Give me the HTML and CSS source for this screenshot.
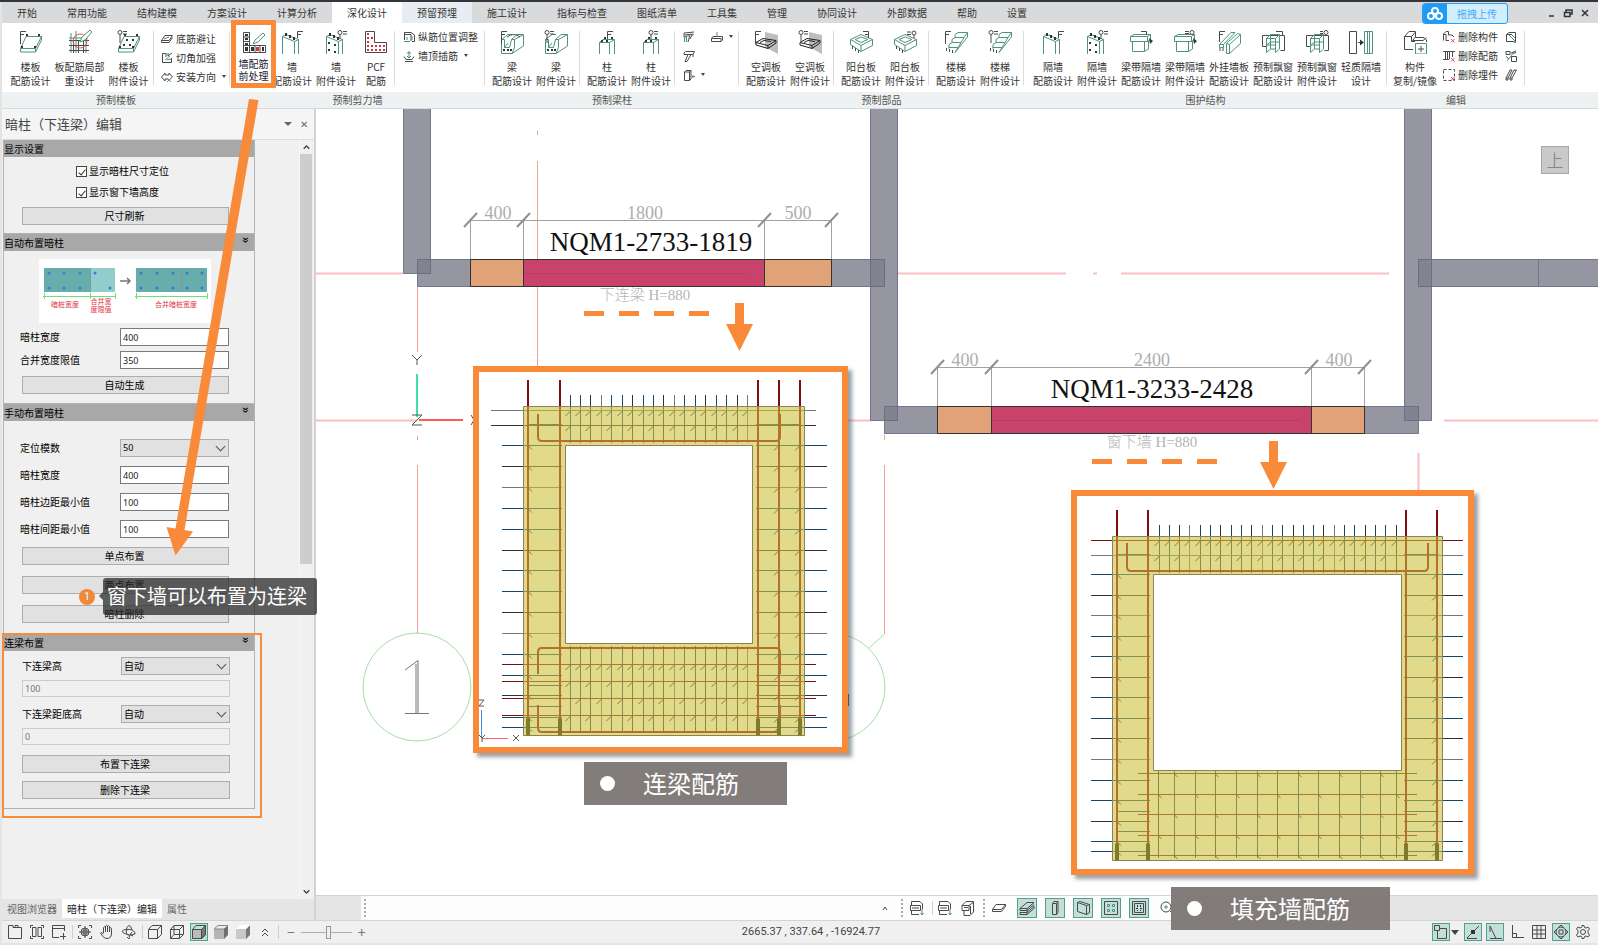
FILE: index.html
```html
<!DOCTYPE html>
<html lang="zh-CN">
<head>
<meta charset="utf-8">
<title>深化设计</title>
<link rel="stylesheet" href="styles.css">
</head>
<body>
<svg class="defs" aria-hidden="true">
  <symbol id="flag-l" viewBox="0 0 24 24"><path class="k" d="M1.500 14V1.500H7M2 4.500H5"/></symbol>
  <symbol id="flag-r" viewBox="0 0 24 24"><path class="k" d="M17.500 8V1.500H23M18 4.500H21"/></symbol>
  <symbol id="pin-l" viewBox="0 0 24 24"><circle class="k" cx="3" cy="2.500" r="2"/><path class="k" d="M3 5V13M6 1.500H10M6 4H10"/></symbol>
  <symbol id="pin-r" viewBox="0 0 24 24"><circle class="k" cx="16" cy="2.500" r="2"/><path class="k" d="M16 5V9M19 1.500H23M19 4H23"/></symbol>
  <symbol id="slab" viewBox="0 0 24 24"><path class="g" d="M7 6.500H22.500L16.500 18.500H1.500ZM1.500 18.500V22H16.500V18.500M22.500 6.500V10L16.500 22"/><path class="d" d="M7 4h2v2H7zM19 4h2v2h-2zM2 16h2v2H2zM15 16h2v2h-2z"/></symbol>
  <symbol id="i-slab-bar" viewBox="0 0 24 24"><use href="#slab"/><use href="#flag-l"/></symbol>
  <symbol id="i-slab-part" viewBox="0 0 24 24"><use href="#slab"/><use href="#pin-l"/><path class="d" d="M9 9h2v2H9zM15 9h2v2h-2zM6 14h2v2H6zM12 14h2v2h-2z"/></symbol>
  <symbol id="i-slab-local" viewBox="0 0 24 24"><path class="g" d="M3 3V23M8 1V23M1 8H20M18 9V23"/><path class="k" d="M1 10.500H21M1 15.500H21M1 20.500H21M5.500 10V23M10.500 10V23M15.500 10V23"/><circle class="rs" cx="12" cy="11" r="7"/><path class="g w" d="M12 12L14 7L22 0L24 2L17 10Z"/></symbol>
  <symbol id="i-prewall" viewBox="0 0 24 24"><path class="k" d="M1.500 1.500H7.500V14.500H23.500V21.500H1.500ZM1.500 14.500H7.500V21.500M1.500 6H7.500M1.500 10.500H7.500M13 14.500V21.500M18 14.500V21.500"/><path class="d" d="M3 3h3v2H3zM3 7h3v2H3zM3 12h3v2H3zM3 16h3v4H3zM9 16h3v4H9zM20 16h2v4h-2z"/><path class="rf" d="M14 16h3v4h-3z"/><path class="g w" d="M11 13L13 9L21 2L23 4L16 11Z"/></symbol>
  <symbol id="wall" viewBox="0 0 24 24"><path class="g" d="M2.500 24V6.500L14.500 11.500V24M14.500 11.500L18.500 9.500V24M2.500 6.500L6 4.500L18.500 9.500"/><path class="d" d="M5 3h2v3H5zM9 5h2v3H9zM13 7h2v3h-2z"/></symbol>
  <symbol id="i-wall-bar" viewBox="0 0 24 24"><use href="#wall"/><use href="#flag-r"/></symbol>
  <symbol id="i-wall-part" viewBox="0 0 24 24"><use href="#wall"/><use href="#pin-r"/><path class="d" d="M4 12h2v2H4zM10 14h2v2h-2zM4 19h2v2H4zM10 21h2v2h-2z"/></symbol>
  <symbol id="i-pcf" viewBox="0 0 24 24"><path class="k" d="M1.500 1.500H10.500V12.500H22.500V22.500H1.500Z"/><path class="rf" d="M3 3h2v2H3zM3 7h2v2H3zM3 11h2v2H3zM7 7h2v2H7zM3 15h2v2H3zM7 15h2v2H7zM11 15h2v2h-2zM15 15h2v2h-2zM19 15h2v2h-2zM3 19h2v2H3zM7 19h2v2H7zM11 19h2v2h-2zM15 19h2v2h-2zM19 19h2v2h-2z"/></symbol>
  <symbol id="beam" viewBox="0 0 24 24"><path class="g" d="M1.500 23.500V9.500H4.500V17.500H9.500L11.500 9.500H14.500V17.500L12 23.500ZM1.500 9.500L8 4.500H12M11.500 9.500L17 4.500H23.500V16L12 23.500M14.500 9.500L23.500 4.500M4.500 17.500L8 13"/><path class="d" d="M3 19h2v2H3zM7 19h2v2H7zM10 19h2v2h-2z"/></symbol>
  <symbol id="i-beam-bar" viewBox="0 0 24 24"><use href="#beam"/><use href="#flag-l"/><path class="k" d="M7 7Q14 2 20 7"/></symbol>
  <symbol id="i-beam-part" viewBox="0 0 24 24"><use href="#beam"/><use href="#pin-l"/></symbol>
  <symbol id="column" viewBox="0 0 24 24"><path class="g" d="M4.500 24V12.500H14.500V24M4.500 12.500L8 9.500H19.500L14.500 12.500M19.500 9.500V24"/><path class="d" d="M6 10h2v2H6zM11 10h2v2h-2zM9 7h2v2H9zM16 7h2v2h-2z"/></symbol>
  <symbol id="i-col-bar" viewBox="0 0 24 24"><use href="#column"/><path class="k" d="M12.500 9V1.500H18M13 4.500H16"/></symbol>
  <symbol id="i-col-part" viewBox="0 0 24 24"><use href="#column"/><use href="#pin-r" x="-4"/></symbol>
  <symbol id="ac" viewBox="0 0 24 24"><path fill="#bdbdbd" d="M11 2L24 5V24L11 17Z"/><path class="k dk" d="M2 12.500L9 8.500L22 10.500L14 15.500ZM2 12.500V15L14 18.500V15.500M22 10.500V13L14 18.500M6 12.500L10 10.500L17 11.500"/></symbol>
  <symbol id="i-ac-bar" viewBox="0 0 24 24"><use href="#ac"/><use href="#flag-l"/></symbol>
  <symbol id="i-ac-part" viewBox="0 0 24 24"><use href="#ac"/><use href="#pin-l"/></symbol>
  <symbol id="balcony" viewBox="0 0 24 24"><path class="g" d="M1.500 9.500L12 4.500L23.500 9.500L12 15.500ZM1.500 9.500V14.500L12 21.500V15.500M23.500 9.500V15.500L12 21.500M6 9.500L12 7L19 9.500L12 12.500Z"/><path class="k" d="M3.500 16V19M6.500 18V21M9.500 20V23"/></symbol>
  <symbol id="i-bal-bar" viewBox="0 0 24 24"><use href="#balcony"/><path class="k" d="M19.500 8V1.500H14M19 4.500H16"/></symbol>
  <symbol id="i-bal-part" viewBox="0 0 24 24"><use href="#balcony"/><circle class="k" cx="21" cy="3" r="2"/><path class="k" d="M21 5V8M14 2H18M14 4.500H18"/></symbol>
  <symbol id="stair" viewBox="0 0 24 24"><path class="g" d="M11 4.500L14 2.500H23.500L20 7.500H11ZM8 9.500L11 7.500H20L17 12.500H8ZM5 14.500L8 12.500H17L14 17.500H5ZM4 18L7 17.500H14L11 22.500M23.500 2.500V7L11 22.500"/><path class="k" d="M2.500 18V21M5.500 19V22M8.500 20V23"/></symbol>
  <symbol id="i-stair-bar" viewBox="0 0 24 24"><use href="#stair"/><use href="#flag-l"/></symbol>
  <symbol id="i-stair-part" viewBox="0 0 24 24"><use href="#stair"/><use href="#pin-l"/></symbol>
  <symbol id="bwall" viewBox="0 0 24 24"><path class="g" d="M1.500 6.500H18.500V11.500H1.500ZM1.500 6.500L5 4.500H21.500L18.500 6.500M21.500 4.500V9.500L18.500 11.500M3.500 11.500V21.500H15.500V11.500M15.500 21.500L19.500 19V11"/><path class="d" d="M20 8l4 3-3 3z"/></symbol>
  <symbol id="i-bwall-bar" viewBox="0 0 24 24"><use href="#bwall"/><path class="k" d="M17.500 5V1.500H12"/></symbol>
  <symbol id="i-bwall-part" viewBox="0 0 24 24"><use href="#bwall"/><circle class="k" cx="19" cy="2.500" r="2"/><path class="k" d="M12 1.500H16M12 3.500H16"/></symbol>
  <symbol id="i-hang" viewBox="0 0 24 24"><path class="g" d="M9.500 23.500V13.500L20.500 3.500L23.500 4.500V13.500L12.500 23.500ZM9.500 13.500L12.500 14.500V23.500M12.500 14.500L23.500 4.500M2.500 14.500L14 2.500H18L6.500 14.500ZM2.500 14.500V17.500H6.500V14.500"/><path class="k" d="M2.500 12V1.500H8M3 4.500H6M3 18V21M6 18V21"/></symbol>
  <symbol id="bay" viewBox="0 0 24 24"><path class="k" d="M5 16.500H1.500V5.500H23.500V20.500H19.500"/><path class="g" d="M5.500 22.500V8.500L9.500 4.500H18.500L14.500 8.500H5.500M14.500 8.500V22.500M18.500 4.500V19L14.500 22.500M5.500 15L9.500 12H18.500M14.500 15H5.500M5.500 22.500L9.500 19H14M9.500 4.500V19"/></symbol>
  <symbol id="i-bay-bar" viewBox="0 0 24 24"><use href="#bay"/><path class="k" d="M21.500 6V1.500H15"/></symbol>
  <symbol id="i-bay-part" viewBox="0 0 24 24"><use href="#bay"/><circle class="k" cx="21" cy="2.500" r="2"/><path class="k" d="M15 1.500H18M15 3.500H18"/></symbol>
  <symbol id="i-light" viewBox="0 0 24 24"><path class="k" d="M.5 1.500H7.500V23.500H.5ZM9 12.500H13"/><path class="d" d="M11 9.500L15 12.500L11 15.500Z"/><path class="g" d="M15.500 1.500H23.500V23.500H15.500ZM18.500 1.500V23.500M20.500 1.500V23.500"/></symbol>
  <symbol id="i-copy" viewBox="0 0 24 24"><path class="k" d="M1.500 19.500V6.500L6 1.500H12.500V7L9.500 10.500H20L23.500 7.500M1.500 6.500H8.500V11.500H12M12.500 7.500H21L23.500 10V12M1.500 19.500H10M8.500 6.500L12.500 2"/><path class="g w" d="M12.500 13.500H23.500V24H12.500Z"/><path class="k" d="M18 16V22M15 19H21"/></symbol>
  <symbol id="s-slab" viewBox="0 0 12 12"><path class="k" d="M4 2.500H11.500L8 7.500H.5ZM.5 7.500V9.500H8L11.500 4.500"/><path class="g" d="M3 6L8 4"/></symbol>
  <symbol id="s-corner" viewBox="0 0 12 12"><path class="k" d="M1.500 1.500V10.500H10.500V6M1.500 1.500H5V5M7 1V4L11 1"/><path class="g" d="M4 8L9 4M6 8L10 7"/></symbol>
  <symbol id="s-dir" viewBox="0 0 12 12"><path class="k" d="M.5 6L4 2V4H8V2L11.500 6L8 9M4 8V10L.5 6M4 8H7"/><path class="g" d="M6 7L10 11M6 11L10 7"/></symbol>
  <symbol id="s-adj" viewBox="0 0 12 12"><path class="k" d="M1.500 9V1.500H8L11.500 4V10.500H9M1.500 3.500H8V10"/><path class="g" d="M1 10.500H7M4 6V9M9 5V9"/></symbol>
  <symbol id="s-insert" viewBox="0 0 12 12"><path class="k" d="M1 6.500L3 9.500H9L11 6.500M2 11.500H10"/><path class="g" d="M6 1V8M4 3H8M4 6L6 8L8 6"/></symbol>
  <symbol id="s-node" viewBox="0 0 12 12"><path class="k" d="M1 2L11 1M2 4L10 3M7 4L5 11M9 4L7 8M1 2V6H4"/><path class="g" d="M1.500 11V5H7M3.500 11V6M8 6L11 3"/></symbol>
  <symbol id="s-brace" viewBox="0 0 12 12"><path class="k" d="M1 3L2.500 1.500H11.500L10 4.500H1ZM5 4.500L2 11.500M8 4.500L4 11.500M2 11.500H4M10 4.500V7"/></symbol>
  <symbol id="s-door" viewBox="0 0 12 12"><path class="k" d="M1.500 3V11.500H6.500V3ZM1.500 3L3 1.500H8V10L6.500 11.500M6.500 3L8 1.500"/><path class="g" d="M9 7.500H12M10 6V9"/></symbol>
  <symbol id="s-tray" viewBox="0 0 12 12"><path class="k" d="M.5 7.500L2 5.500H11.500V9L10 10.500H.5ZM.5 7.500H10V10.500"/><path class="g" d="M6 1V6"/></symbol>
  <symbol id="s-delpart" viewBox="0 0 12 12"><path class="k" d="M.5 9.500V3L3 .5H5.500V4H9L11 6M.5 3.500H3V9.500H6"/><path class="rs" d="M8 8L11.500 11.500M11.500 8L8 11.500"/></symbol>
  <symbol id="s-delbar" viewBox="0 0 12 12"><path class="k" d="M0 1.500H12M0 9.500H6M2.500 2V9M4.500 2V9M6.500 2V9M9.500 2V7"/><path class="rs" d="M8 8L11.500 11.500M11.500 8L8 11.500"/></symbol>
  <symbol id="s-delemb" viewBox="0 0 12 12"><path class="k" stroke-dasharray="3 2" d="M.5 .5H11.500V11.500H.5Z"/><path class="rs" d="M8 8L11.500 11.500M11.500 8L8 11.500"/></symbol>
  <symbol id="s-page" viewBox="0 0 12 12"><path class="k" d="M1.500 10.500V3.500L4 1.500H10.500V11.500L8 10.500ZM1.500 3.500H7"/><path class="g" d="M4 4L10 10M7 4L10 7"/></symbol>
  <symbol id="s-swap" viewBox="0 0 12 12"><path class="k" d="M1 1.500H5V4.500H1ZM6.500 6.500H11.500V11.500H6.500ZM1 6.500L4 9M6 3L11 1M8 4L11 2"/><path class="g" d="M2 11L9 2"/></symbol>
  <symbol id="s-hatch" viewBox="0 0 12 12"><path class="k" d="M1 9L5 1H7L3 9ZM5 9L9 1H11.500L7 9ZM1 9V11H3V9M5 9V11H7V9"/></symbol>
  <symbol id="b-folder" viewBox="0 0 16 16"><path class="k" d="M1.500 14.500V1.500H6V3.500H14.500V14.500ZM8 3V1.500H11V3"/></symbol>
  <symbol id="b-cols" viewBox="0 0 16 16"><path class="k" d="M1.500 4V1.500H4M12 1.500H14.500V4M1.500 12V14.500H4M12 14.500H14.500V12M3.500 3.500H7V12.500H3.500ZM9 3.500H12.500V12.500H9Z"/></symbol>
  <symbol id="b-winadd" viewBox="0 0 16 16"><path class="k" d="M8 13.500H1.500V1.500H13.500V7M1.500 4.500H13.500M9 12.500H15M12.500 9V15.500"/></symbol>
  <symbol id="b-fit" viewBox="0 0 16 16"><path class="k" d="M1.500 4V1.500H4M12 1.500H14.500V4M1.500 12V14.500H4M12 14.500H14.500V12M8 2V14M2 8H14"/><circle class="k" cx="8" cy="8" r="4"/><path class="k" d="M6 6H10V10H6Z"/></symbol>
  <symbol id="b-hand" viewBox="0 0 16 16"><path class="k" d="M4.500 9V3.500Q5.500 2 6.500 3.500V8V2Q7.500 .5 8.500 2V8V2.500Q9.500 1 10.500 2.500V8V4Q12 3 12.500 4.500V10Q12 14.500 8 14.500Q5 14.500 3.500 12L1.500 9Q2 7.500 4.500 10"/></symbol>
  <symbol id="b-orbit" viewBox="0 0 16 16"><path class="k" d="M5 6Q8 4.500 11 6Q15 8 14 10Q10 12 6 10.500M5 10Q1 9 1.500 7Q2 5.500 5 5.500M6 11Q4 5 7.500 1.500Q10 1 11 6M8 11Q9 14 8 15L6 13M12 12L9 10.500L11 8"/></symbol>
  <symbol id="b-cube" viewBox="0 0 16 16"><path class="k" d="M1.500 5.500H10.500V14.500H1.500ZM1.500 5.500L5 1.500H14.500V10.500L10.500 14.500M10.500 5.500L14.500 1.500"/></symbol>
  <symbol id="b-wire" viewBox="0 0 16 16"><use href="#b-cube"/><path class="k" d="M5 1.500V10.500H14M5 10.500L1.500 14.500"/></symbol>
  <symbol id="b-solid" viewBox="0 0 16 16"><path fill="#bbb" d="M1 5H11V15H1Z"/><path fill="#777" d="M11 5L15 1V11L11 15Z"/><use href="#b-cube"/></symbol>
  <symbol id="b-shade" viewBox="0 0 16 16"><path fill="#b5b5b5" d="M1 5H11V15H1Z"/><path fill="#707070" d="M11 5L15 1V11L11 15Z"/><path fill="#eee" stroke="#888" d="M1 5L5 1.500H15L11 5Z"/></symbol>
  <symbol id="b-plain" viewBox="0 0 16 16"><path fill="#c8c8c8" d="M1 5H11V15H1Z"/><path fill="#777" d="M11 5L15 1V11L11 15Z"/><path fill="#fff" d="M1 5L5 1H15L11 5Z"/></symbol>
  <symbol id="b-up" viewBox="0 0 16 16"><path class="k" d="M5 8L8 5L11 8M5 12L8 9L11 12"/></symbol>
  <symbol id="v-sheet" viewBox="0 0 16 16"><path class="k" d="M2.500 5V1.500H11L13.500 4V9M2.500 11V14.500H10M1.500 5.500H11.500V10.500H1.500ZM3 8H10"/><path class="g" d="M13 9V15L11.500 13M13 15L14.500 13"/></symbol>
  <symbol id="v-print" viewBox="0 0 16 16"><path class="k" d="M2 5.500L6 1.500H13.500V12L10 15.500H4V11M2 5.500H9V10.500H2ZM9 5.500L13 2.500M4 7.500H8M10.500 6V14"/></symbol>
  <symbol id="v-plane" viewBox="0 0 16 16"><path class="k" d="M5 4.500H14.500L10.500 9.500H1.500ZM1.500 9.500V11.500H10.500L14.500 6.500V4.500"/></symbol>
  <symbol id="v-layers" viewBox="0 0 16 16"><path class="k" d="M1 8.500L8 2.500H15L8 8.500ZM1 8.500V10.500H8L15 4.500M1 12.500V14.500H8L15 8.500V6M1 12.500H8L15 6.500M8 8.500V14.500"/></symbol>
  <symbol id="v-col" viewBox="0 0 16 16"><path class="k" d="M5.500 3.500H9.500V14.500H5.500ZM5.500 3.500L7 1.500H11V12.500L9.500 14.500M9.500 3.500L11 1.500"/></symbol>
  <symbol id="v-wall" viewBox="0 0 16 16"><path class="k" d="M2.500 2.500L11.500 5.500V14.500L2.500 11.500ZM2.500 2.500L5 1.500L14.500 4.500V12.500L11.500 14.500M11.500 5.500L14.500 4.500"/></symbol>
  <symbol id="v-grid4" viewBox="0 0 16 16"><path class="k" d="M1.500 1.500H14.500V14.500H1.500Z"/><path class="g" d="M4.500 4.500H6.500V6.500H4.500ZM9.500 4.500H11.500V6.500H9.500ZM4.500 9.500H6.500V11.500H4.500ZM9.500 9.500H11.500V11.500H9.500Z"/></symbol>
  <symbol id="v-dots" viewBox="0 0 16 16"><path class="k" d="M1.500 1.500H14.500V14.500H1.500ZM3.500 3.500H12.500V12.500H3.500Z"/><path class="d" d="M6 5h1v2H6zM9 5h1v2H9zM5 8h2v1H5zM9 8h2v1H9zM6 10h1v1H6zM9 10h1v1H9z"/></symbol>
  <symbol id="v-zoom" viewBox="0 0 16 16"><circle class="k" cx="7" cy="7" r="5"/><path class="k" d="M11 11L15 15"/><path class="g" d="M5 7H9M7 5V9"/></symbol>
  <symbol id="t-snap" viewBox="0 0 16 16"><path class="k" d="M4.500 7V14.500H13.500V4.500H7M1.500 1.500H6.500V6.500H1.500Z"/></symbol>
  <symbol id="t-near" viewBox="0 0 16 16"><path class="k" d="M2 14L14 2M2 14.500H12"/><path class="d" d="M6 6h4v4H6z"/></symbol>
  <symbol id="t-polar" viewBox="0 0 16 16"><path class="k" d="M3 2L9 14.500H15M3 14.500H9M3 2V8"/></symbol>
  <symbol id="t-ortho" viewBox="0 0 16 16"><path class="k" d="M3.500 1V13.500H15M3.500 9.500H7.500V13.500"/></symbol>
  <symbol id="t-grid" viewBox="0 0 16 16"><path class="k" d="M1.500 1.500H14.500V14.500H1.500ZM6 1.500V14.500M10 1.500V14.500M1.500 6H14.500M1.500 10H14.500"/></symbol>
  <symbol id="t-view" viewBox="0 0 16 16"><path class="k" d="M5 4L8 1L11 4M5 12L8 15L11 12M4 5L1 8L4 11M12 5L15 8L12 11M6 6H10V10H6Z"/><circle class="k" cx="8" cy="8" r="5"/></symbol>
  <symbol id="t-gear" viewBox="0 0 16 16"><path class="k" d="M7 1.500H9L9.500 3.500L11 4L13 3L14.500 5L13 6.500V9L14.500 11L13 13L11 12L9.500 12.500L9 14.500H7L6.500 12.500L5 12L3 13L1.500 11L3 9V6.500L1.500 5L3 3L5 4L6.500 3.500Z"/><circle class="k" cx="8" cy="8" r="2.500"/></symbol>
</svg>

<div class="app">
  <header class="menubar">
    <nav class="menu">
      <button>开始</button><button>常用功能</button><button>结构建模</button><button>方案设计</button><button>计算分析</button><button class="active">深化设计</button><button class="hover">预留预埋</button><button>施工设计</button><button>指标与检查</button><button>图纸清单</button><button>工具集</button><button>管理</button><button>协同设计</button><button>外部数据</button><button>帮助</button><button>设置</button>
    </nav>
    <button class="upload"><svg viewBox="0 0 24 20"><circle cx="12" cy="7" r="3"/><circle cx="8" cy="12" r="3"/><circle cx="16" cy="12" r="3"/></svg><span>拖拽上传</span></button>
    <div class="winctl">
      <button aria-label="最小化"><svg viewBox="0 0 10 10"><path d="M3 8H8"/></svg></button>
      <button aria-label="还原"><svg viewBox="0 0 10 10"><path d="M3 4V2H9V6H7M1.500 4.500H7V8.500H1.500Z"/></svg></button>
      <button aria-label="关闭"><svg viewBox="0 0 10 10"><path d="M2 2L8 8M8 2L2 8"/></svg></button>
    </div>
  </header>

  <div class="ribbon">
    <section class="group">
      <div class="tools">
        <div class="cluster wide">
          <button class="big"><svg><use href="#i-slab-bar"/></svg>楼板<br>配筋设计</button>
          <button class="big"><svg><use href="#i-slab-local"/></svg>板配筋局部<br>重设计</button>
          <button class="big"><svg><use href="#i-slab-part"/></svg>楼板<br>附件设计</button>
        </div>
        <div class="cluster list">
          <button class="small"><svg><use href="#s-slab"/></svg>底筋避让</button>
          <button class="small"><svg><use href="#s-corner"/></svg>切角加强</button>
          <button class="small more"><svg><use href="#s-dir"/></svg>安装方向</button>
        </div>
      </div>
      <h2>预制楼板</h2>
    </section>
    <section class="group">
      <div class="tools">
        <div class="cluster flush">
          <button class="big marked"><svg><use href="#i-prewall"/></svg>墙配筋<br>前处理</button>
          <button class="big"><svg><use href="#i-wall-bar"/></svg>墙<br>配筋设计</button>
          <button class="big"><svg><use href="#i-wall-part"/></svg>墙<br>附件设计</button>
          <button class="big narrow"><svg><use href="#i-pcf"/></svg>PCF<br>配筋</button>
        </div>
        <div class="cluster list wall-list">
          <button class="small"><svg><use href="#s-adj"/></svg>纵筋位置调整</button>
          <button class="small more"><svg><use href="#s-insert"/></svg>墙顶插筋</button>
        </div>
      </div>
      <h2>预制剪力墙</h2>
    </section>
    <section class="group">
      <div class="tools">
        <div class="cluster">
          <button class="big"><svg><use href="#i-beam-bar"/></svg>梁<br>配筋设计</button>
          <button class="big"><svg><use href="#i-beam-part"/></svg>梁<br>附件设计</button>
        </div>
        <div class="cluster">
          <button class="big"><svg><use href="#i-col-bar"/></svg>柱<br>配筋设计</button>
          <button class="big"><svg><use href="#i-col-part"/></svg>柱<br>附件设计</button>
        </div>
        <div class="cluster icons">
          <button class="small" aria-label="节点"><svg><use href="#s-node"/></svg></button>
          <button class="small more" aria-label="托盘"><svg><use href="#s-tray"/></svg></button>
          <button class="small" aria-label="斜撑"><svg><use href="#s-brace"/></svg></button><span></span>
          <button class="small more" aria-label="柱门"><svg><use href="#s-door"/></svg></button>
        </div>
      </div>
      <h2>预制梁柱</h2>
    </section>
    <section class="group">
      <div class="tools">
        <div class="cluster">
          <button class="big"><svg><use href="#i-ac-bar"/></svg>空调板<br>配筋设计</button>
          <button class="big"><svg><use href="#i-ac-part"/></svg>空调板<br>附件设计</button>
        </div>
        <div class="cluster">
          <button class="big"><svg><use href="#i-bal-bar"/></svg>阳台板<br>配筋设计</button>
          <button class="big"><svg><use href="#i-bal-part"/></svg>阳台板<br>附件设计</button>
        </div>
        <div class="cluster">
          <button class="big"><svg><use href="#i-stair-bar"/></svg>楼梯<br>配筋设计</button>
          <button class="big"><svg><use href="#i-stair-part"/></svg>楼梯<br>附件设计</button>
        </div>
      </div>
      <h2>预制部品</h2>
    </section>
    <section class="group">
      <div class="tools">
        <div class="cluster roomy">
          <button class="big"><svg><use href="#i-wall-bar"/></svg>隔墙<br>配筋设计</button>
          <button class="big"><svg><use href="#i-wall-part"/></svg>隔墙<br>附件设计</button>
          <button class="big"><svg><use href="#i-bwall-bar"/></svg>梁带隔墙<br>配筋设计</button>
          <button class="big"><svg><use href="#i-bwall-part"/></svg>梁带隔墙<br>附件设计</button>
          <button class="big"><svg><use href="#i-hang"/></svg>外挂墙板<br>配筋设计</button>
          <button class="big"><svg><use href="#i-bay-bar"/></svg>预制飘窗<br>配筋设计</button>
          <button class="big"><svg><use href="#i-bay-part"/></svg>预制飘窗<br>附件设计</button>
          <button class="big"><svg><use href="#i-light"/></svg>轻质隔墙<br>设计</button>
        </div>
      </div>
      <h2>围护结构</h2>
    </section>
    <section class="group">
      <div class="tools">
        <div class="cluster edit">
          <button class="big"><svg><use href="#i-copy"/></svg>构件<br>复制/镜像</button>
          <div class="editgrid">
            <button class="small"><svg><use href="#s-delpart"/></svg>删除构件</button><button class="small" aria-label="页面"><svg><use href="#s-page"/></svg></button>
            <button class="small"><svg><use href="#s-delbar"/></svg>删除配筋</button><button class="small" aria-label="替换"><svg><use href="#s-swap"/></svg></button>
            <button class="small"><svg><use href="#s-delemb"/></svg>删除埋件</button><button class="small" aria-label="填充"><svg><use href="#s-hatch"/></svg></button>
          </div>
        </div>
      </div>
      <h2>编辑</h2>
    </section>
    <div class="ribbon-rest"></div>
  </div>

  <main class="work">
    <aside class="panel">
      <div class="panel-title"><h1>暗柱（下连梁）编辑</h1><button class="drop" aria-label="选项"></button><button aria-label="关闭面板">✕</button></div>
      <div class="panel-body">
        <form class="sections">
          <fieldset class="box s1">
            <div class="head">显示设置</div>
            <div class="content">
              <label class="check"><input type="checkbox" checked>显示暗柱尺寸定位</label>
              <label class="check"><input type="checkbox" checked>显示窗下墙高度</label>
              <button type="button">尺寸刷新</button>
            </div>
          </fieldset>
          <fieldset class="box s2">
            <div class="head fold">自动布置暗柱</div>
            <div class="content">
              <svg class="figure" viewBox="0 0 172 64">
                <rect width="172" height="64" fill="#fff"/>
                <path fill="#67adab" d="M5 9H51V33H5ZM97 9H168V33H97Z"/><path fill="#92cccc" d="M51 9H76V33H51Z"/>
                <path stroke="#809a9a" d="M51.500 9V33M142.500 9V33"/>
                <path class="dots" d="M10 14h0M25 14h0M41 14h0M56 14h0M10 29h0M25 29h0M41 29h0M71 29h0M102 14h0M118 14h0M134 14h0M148 14h0M163 14h0M102 29h0M118 29h0M134 29h0M148 29h0M163 29h0"/>
                <path stroke="#6ee06e" d="M4 37.500H77M96 37.500H169M5.500 34V40M51.500 34V40M76.500 34V40M97.500 34V40M168.500 34V40"/>
                <path stroke="#777" stroke-width="1.500" fill="none" d="M81 22H91M88 19L91 22L88 25"/>
                <text x="26" y="48">暗桩宽度</text><text x="62" y="45">合并宽</text><text x="62" y="53">度限值</text><text x="137" y="48">合并暗桩宽度</text>
              </svg>
              <div class="row"><label for="w1">暗柱宽度</label><input id="w1" value="400"></div>
              <div class="row"><label for="w2">合并宽度限值</label><input id="w2" value="350"></div>
              <button type="button" class="apart">自动生成</button>
            </div>
          </fieldset>
          <fieldset class="box s3">
            <div class="head fold">手动布置暗柱</div>
            <div class="content">
              <div class="row"><label for="m1">定位模数</label><select id="m1" class="num-select"><option>50</option></select></div>
              <div class="row"><label for="m2">暗柱宽度</label><input id="m2" value="400"></div>
              <div class="row"><label for="m3">暗柱边距最小值</label><input id="m3" value="100"></div>
              <div class="row"><label for="m4">暗柱间距最小值</label><input id="m4" value="100"></div>
              <button type="button">单点布置</button>
              <button type="button" class="apart">两点布置</button>
              <button type="button" class="apart">暗柱删除</button>
            </div>
          </fieldset>
          <fieldset class="box s4">
            <div class="head fold">连梁布置</div>
            <div class="content">
              <div class="row"><label for="b1">下连梁高</label><select id="b1"><option>自动</option></select></div>
              <input aria-label="下连梁高数值" value="100" disabled>
              <div class="row"><label for="b2">下连梁距底高</label><select id="b2"><option>自动</option></select></div>
              <input aria-label="下连梁距底高数值" value="0" disabled>
              <button type="button">布置下连梁</button>
              <button type="button">删除下连梁</button>
            </div>
          </fieldset>
        </form>
        <div class="scroll" aria-hidden="true"><svg viewBox="0 0 14 14"><path d="M4 9L7 6L10 9"/></svg><div class="thumb"></div><svg viewBox="0 0 14 14"><path d="M4 5L7 8L10 5"/></svg></div>
      </div>
      <div class="panel-tabs"><button>视图浏览器</button><button class="active">暗柱（下连梁）编辑</button><button>属性</button></div>
    </aside>

    <div class="stage">
      <div class="canvas">
        <svg class="plan" width="1282" height="786" viewBox="316 109 1282 786">
          <g class="axis"><path d="M316 273.500H403M897 273.500H1066M1093 273.500H1097M1121 273.500H1389M316 420.500H417M840 420.500H871M1444 420.500H1598M1418.500 453V490"/><path class="deep" d="M537.500 131V135M537.500 161V370M417.500 287V352M417.500 436V440M417.500 465V634M884.500 435V440M884.500 465V634"/></g>
          <g class="wall"><path d="M403.500 109V273.500H430.500V109M870.500 109V420.500H897.500V109M1404.500 109V420.500H1431.500V109"/><path d="M417.500 259.500H884.500V286.500H417.500ZM884.500 406.500H1418.500V433.500H884.500ZM1418.500 259.500H1600V286.500H1418.500ZM1538.500 259.500V286.500"/></g>
          <g class="joint"><path d="M417.500 259.500H430.500V273.500H417.500ZM870.500 259.500H884.500V286.500H870.500ZM884.500 406.500H897.500V420.500H884.500ZM1404.500 406.500H1418.500V420.500H1404.500ZM1418.500 259.500H1431.500V286.500H1418.500Z"/></g>
          <g stroke="#333"><path fill="#e0a276" d="M470.500 259.500H831.500V286.500H470.500ZM937.500 406.500H1364.500V433.500H937.500Z"/><path fill="#c8426c" d="M523.500 259.500H764.500V286.500H523.500ZM991.500 406.500H1311.500V433.500H991.500Z"/></g>
          <path class="core" d="M524 273.500H745M992 420.500H1300"/>
          <path class="dim" d="M470.500 259V220.500H831.500V259M523.500 220V259M764.500 220V259M937.500 406V367.500H1364.500V406M991.500 367V406M1311.500 367V406"/>
          <path class="tick" d="M464 227L477 213M517 227L530 213M758 227L771 213M825 227L838 213M931 374L944 360M985 374L998 360M1305 374L1318 360M1358 374L1371 360"/>
          <g class="size"><text x="498" y="219">400</text><text x="645" y="219">1800</text><text x="798" y="219">500</text><text x="965" y="366">400</text><text x="1152" y="366">2400</text><text x="1339" y="366">400</text></g>
          <g class="code"><text x="651" y="251">NQM1-2733-1819</text><text x="1152" y="398">NQM1-3233-2428</text></g>
          <g class="note"><text x="645" y="300">下连梁 H=880</text><text x="1152" y="447">窗下墙 H=880</text></g>
          <g class="bubble"><circle cx="417" cy="687" r="54"/><circle cx="831" cy="687" r="54"/><path d="M868 649L884.500 634"/></g>
          <path class="numeral" d="M405 670L418 660.500V713M416 664V713M405 713.500H429"/>
          <path stroke="#555" stroke-width="2" d="M848 694V706"/>
          <path stroke="#3fe0b0" stroke-width="2" d="M417 374V417"/><path stroke="#ff5a5a" stroke-width="2" d="M419 420H463"/>
          <path class="letter" d="M412 355L417 360L422 355M417 360V365M412 415H422L412 425H422M471 415L474 420L471 425"/>
          <path class="mark" d="M584 311H604V316H584ZM619 311H639V316H619ZM654 311H674V316H654ZM689 311H709V316H689ZM1092 459H1112V464H1092ZM1127 459H1147V464H1127ZM1162 459H1182V464H1162ZM1197 459H1217V464H1197ZM735 303H744V324H753L739.500 351L726 324H735ZM1269 441H1278V462H1287L1273.500 489L1260 462H1269Z"/>
        </svg>
        <button class="cube">上</button>
        <figure class="detail one"><svg id="detail-one" width="363" height="375" viewBox="479 372 363 375"></svg></figure>
        <figure class="detail two"><svg id="detail-two" width="391" height="373" viewBox="1077 496 391 373"></svg></figure>
        <p class="caption c1">连梁配筋</p>
        <p class="caption c2">填充墙配筋</p>
      </div>
      <div class="viewbar">
        <div class="viewtools">
          <span class="grip first"></span><button class="fold-up" aria-label="收起"><svg viewBox="0 0 16 16"><path class="k" d="M6 10L8 7L10 10"/></svg></button><span class="grip"></span>
          <button aria-label="图纸"><svg><use href="#v-sheet"/></svg></button><span class="bar"></span>
          <button class="near" aria-label="导出"><svg><use href="#v-sheet"/></svg></button><button class="print" aria-label="打印"><svg><use href="#v-print"/></svg></button><span class="grip"></span>
          <button aria-label="平面"><svg><use href="#v-plane"/></svg></button>
          <button class="on" aria-label="板"><svg><use href="#v-layers"/></svg></button><button class="on" aria-label="柱"><svg><use href="#v-col"/></svg></button><button class="on" aria-label="墙"><svg><use href="#v-wall"/></svg></button><button class="on" aria-label="埋件"><svg><use href="#v-grid4"/></svg></button><button class="on" aria-label="钢筋"><svg><use href="#v-dots"/></svg></button>
          <button aria-label="缩放"><svg><use href="#v-zoom"/></svg></button>
        </div>
      </div>
    </div>
  </main>

  <footer class="status">
    <div class="left">
      <button aria-label="打开"><svg><use href="#b-folder"/></svg></button><button aria-label="平铺"><svg><use href="#b-cols"/></svg></button><button aria-label="新窗口"><svg><use href="#b-winadd"/></svg></button><span class="bar"></span>
      <button aria-label="全图"><svg><use href="#b-fit"/></svg></button><button aria-label="平移"><svg><use href="#b-hand"/></svg></button><button aria-label="旋转"><svg><use href="#b-orbit"/></svg></button><span class="bar"></span>
      <button aria-label="隐藏线"><svg><use href="#b-cube"/></svg></button><button aria-label="线框"><svg><use href="#b-wire"/></svg></button><button class="on" aria-label="着色"><svg><use href="#b-solid"/></svg></button><button aria-label="真实"><svg><use href="#b-shade"/></svg></button><button aria-label="无边"><svg><use href="#b-plain"/></svg></button><button aria-label="更多"><svg><use href="#b-up"/></svg></button><span class="bar"></span>
      <label class="zoom"><span>−</span><input type="range" min="0" max="100" value="54" aria-label="缩放"><span>+</span></label>
    </div>
    <output>2665.37 , 337.64 , -16924.77</output>
    <div class="right">
      <button class="on" aria-label="捕捉"><svg><use href="#t-snap"/></svg></button><span class="caret"></span><button class="on" aria-label="最近点"><svg><use href="#t-near"/></svg></button><button class="on" aria-label="极轴"><svg><use href="#t-polar"/></svg></button><button aria-label="正交"><svg><use href="#t-ortho"/></svg></button><button aria-label="栅格"><svg><use href="#t-grid"/></svg></button><button class="on" aria-label="视图"><svg><use href="#t-view"/></svg></button><button aria-label="设置"><svg><use href="#t-gear"/></svg></button>
    </div>
  </footer>

  <svg class="pointer" width="30" height="456" viewBox="165 100 30 456" aria-hidden="true"><path d="M249 99L258.500 100L184.500 530L193 531.500L175.500 555.500L166.500 527L175.500 528.500Z"/></svg>
  <div class="step"><span class="num">1</span><span class="tip">窗下墙可以布置为连梁</span></div>
</div>
<script src="script.js"></script>
</body>
</html>
```

FILE: styles.css
```css
* { box-sizing: border-box; }
body {
  margin: 0;
  background: #e4e4e4;
  color: #333;
  font: 10px/14px "Noto Sans CJK SC", "Noto Sans", sans-serif;
}
button, input, select, fieldset { font: inherit; color: inherit; margin: 0; padding: 0; border: 0; background: none; border-radius: 0; }
h1, h2, p, figure { margin: 0; font-weight: 400; }
svg { display: block; overflow: visible; flex: none; }
.defs { position: absolute; width: 0; height: 0; }
.k { fill: none; stroke: #4a4a4a; }
.k.dk { stroke: #222; }
.g { fill: none; stroke: #4f927f; }
.g.w { fill: #fff; }
.d { fill: #333; }
.rf { fill: #d8343c; }
.rs { fill: none; stroke: #e05555; }

.app {
  position: relative;
  display: flex;
  flex-direction: column;
  min-height: 100vh;
  padding: 2px 0 2px 2px;
  overflow: hidden;
}
.app::before { content: ""; position: absolute; inset: 0 0 auto; height: 2px; background: #35363b; }

.menubar { display: flex; height: 21px; background: #d9dadc; }
.menu { display: flex; flex: 1; }
.menu button { padding: 0 15px; white-space: nowrap; }
.menu .active { background: #fff; }
.menu .hover { background: #e8edf4; }
.upload {
  display: flex; align-items: center; width: 86px; height: 21px; margin: 1px 38px 0 0;
  border: 1px solid #2b9df4; border-radius: 3px; background: #d2efff; color: #45aaf5; overflow: hidden; position: relative;
}
.upload svg { width: 24px; height: 20px; background: #1e9bf5; fill: none; stroke: #fff; stroke-width: 2; }
.upload span { flex: 1; }
.winctl { display: flex; gap: 7px; align-items: center; margin-right: 8px; }
.winctl svg { width: 10px; height: 10px; fill: none; stroke: #333; stroke-width: 1.5; }
.winctl button { display: flex; }

.ribbon { display: flex; height: 86px; background: #fff; border-bottom: 1px solid #d6dadc; }
.group { display: flex; flex-direction: column; }
.tools { display: flex; flex: 1; }
.group h2, .ribbon-rest::after { height: 16px; line-height: 15px; font-size: 10px; text-align: center; background: #edf1f2; color: #555; }
.ribbon-rest { flex: 1; display: flex; align-items: flex-end; }
.ribbon-rest::after { content: ""; flex: 1; }
.cluster { position: relative; display: flex; align-items: flex-start; padding: 0 1px 0 5px; border-right: 1px solid transparent; }
.cluster::after { content: ""; position: absolute; right: -1px; top: 8px; bottom: 7px; width: 1px; background: #dcdcdc; }
.cluster.wide { padding: 0 0 0 4px; }
.cluster.flush { padding: 0; }
.cluster.roomy { padding: 0 3px 0 7px; }
.big { display: grid; justify-items: center; justify-content: center; width: 44px; padding-top: 7px; white-space: nowrap; line-height: 14px; text-align: center; }
.big svg { width: 24px; height: 24px; margin-bottom: 6px; }
.wide .big { width: 49px; }
.big.narrow { width: 36px; }
.big.marked { position: relative; z-index: 2; width: 45px; height: 68px; margin: -3px -6px 0 1px; padding-top: 6px; border: 5px solid #f88a3a; background: #fff; color: #223; line-height: 12px; align-content: start; }
.big.marked svg { margin-bottom: 3px; }
.cluster.list { flex-direction: column; padding: 6px 0 0 7px; width: 76px; }
.cluster.wall-list { width: 90px; padding: 4px 0 0 8px; }
.small { position: relative; display: flex; align-items: center; gap: 3px; height: 19px; white-space: nowrap; }
.small svg { width: 12px; height: 12px; }
.small.more::after, .caret { content: ""; border: 2px solid transparent; border-top: 3px solid #444; border-bottom: 0; margin-left: 3px; }
.cluster.icons { display: grid; grid-template: repeat(3, 19px) / 28px 28px; width: 64px; padding: 4px 0 0 8px; }
.cluster.edit { padding: 0; width: 138px; }
.edit .big { width: 56px; }
.editgrid { display: grid; grid-template: repeat(3, 19px) / 62px 12px; padding-top: 4px; }

.work { flex: 1; display: flex; }
.panel { display: flex; flex-direction: column; width: 312px; background: #f0f0f0; flex: none; }
.panel-title { display: flex; align-items: center; height: 31px; padding: 0 2px 0 3px; background: #f5f5f5; border-bottom: 1px solid #dcdcdc; color: #444; }
.panel-title h1 { flex: 1; font-size: 13px; }
.panel-title button { width: 16px; color: #666; }
.panel-title .drop { width: 0; margin-right: 4px; border: 4px solid transparent; border-top-color: #666; border-bottom: 0; }
.panel-body { flex: 1; display: flex; justify-content: space-between; }
.sections { width: 253px; padding-left: 1px; color: #000; }
.box { position: relative; min-width: 0; border: 1px solid #b2b2b2; border-top: 0; }
.head { position: relative; height: 17px; line-height: 17px; background: #a8a8a8; }
.fold::after { content: "»"; position: absolute; right: 4px; top: 0; font-size: 12px; font-weight: 700; line-height: 12px; transform: rotate(90deg); }
.content { display: flex; flex-direction: column; padding: 7px 25px 9px 18px; gap: 5px; }
.content button { height: 18px; line-height: 16px; padding-right: 2px; border: 1px solid #adadad; background: #e1e1e1; }
.content .apart { margin-top: 2px; }
.check { display: flex; align-items: center; gap: 2px; height: 12px; margin-left: 54px; white-space: nowrap; }
.check input { appearance: none; width: 11px; height: 11px; border: 1px solid #444; background: #fff; display: grid; place-items: center; }
.check input::after { content: ""; width: 3px; height: 6px; border: solid #333; border-width: 0 1px 1px 0; transform: rotate(40deg); }
.s1 .content { gap: 9px; padding-top: 8px; padding-bottom: 8px; }
.s2 .content { padding-top: 8px; }
.s3 .content { gap: 9px; padding-top: 18px; padding-bottom: 10px; }
.s4 .content { gap: 5px; padding-top: 6px; padding-right: 24px; }
.s4 .content > input { margin-bottom: 3px; }
.s4 .content > input + button { margin: 2px 0 3px; }
.s2 label, .s3 label { margin-left: -2px; }
.row { position: relative; display: grid; grid-template-columns: 1fr 109px; align-items: center; }
.content input:not([type]), select { width: 100%; height: 18px; padding: 0 2px; border: 1px solid #7a7a7a; background: #fff; font-family: "Noto Sans", "Noto Sans CJK SC", sans-serif; font-size: 9px; color: #222; }
.content select { appearance: none; border-color: #adadad; background: #e1e1e1; font-size: 10px; color: #000; }
.content .num-select { font-size: 9px; }
.row:has(select)::after { content: ""; position: absolute; right: 5px; top: 4px; width: 6px; height: 6px; border: solid #555; border-width: 0 1px 1px 0; transform: rotate(45deg); pointer-events: none; }
.content input:disabled { height: 17px; border-color: #ccc; background: #f0f0f0; color: #777; }
.s4::after { content: ""; position: absolute; inset: -1px -8px -10px -2px; border: 2px solid #f98b3a; pointer-events: none; }
.figure { width: 172px; height: 64px; margin-left: 17px; }
.figure .dots { stroke: #2f7fd6; stroke-width: 3; stroke-linecap: round; }
.figure text { font-size: 7px; fill: #e0333c; text-anchor: middle; }
.scroll { display: flex; flex-direction: column; width: 13px; margin-right: 2px; background: #f0f0f0; border-left: 1px solid #f8f8f8; }
.scroll svg { width: 13px; height: 14px; fill: none; stroke: #444; stroke-width: 1.5; }
.scroll .thumb { width: 12px; height: 410px; margin-bottom: auto; background: #cdcdcd; }
.panel-tabs { display: flex; height: 22px; padding-bottom: 2px; background: #e5e5e5; border-bottom: 1px solid #d4d4d4; }
.panel-tabs button { padding: 0 5px; color: #666; }
.panel-tabs .active { background: #fff; color: #222; }

.stage { flex: 1; display: flex; flex-direction: column; min-width: 0; border-left: 2px solid #d2d2d2; }
.canvas { position: relative; flex: 1; min-height: 786px; background: #fff; }
.plan { position: absolute; left: 0; top: 0; }
.axis { stroke: #f9c0c4; stroke-width: 2; }
.axis .deep { stroke: #f59c9c; stroke-width: 1; }
.wall path { fill: #9696a2; stroke: #74748c; }
.joint path { fill: #83838f; stroke: #6c6c84; }
.core { stroke: #b93c64; }
.dim { fill: none; stroke: #a2a2a2; }
.tick { stroke: #8f8f8f; stroke-width: 2; }
.plan text { text-anchor: middle; font-family: "Liberation Serif", "Noto Sans CJK SC", serif; }
.size text { font-size: 18px; fill: #adadad; }
.code text { font-size: 27px; fill: #111; }
.note text { font-size: 15px; fill: #b4b4b4; font-weight: 300; }
.bubble { fill: none; stroke: #a4dfa4; }
.numeral { fill: none; stroke: #777; }
.letter { fill: none; stroke: #555; }
.mark { fill: #f88a3a; }
.cube { position: absolute; right: 29px; top: 37px; width: 28px; height: 28px; border: 1px solid #a8a8a8; background: #c9c9c9; color: #777; font-size: 17px; line-height: 24px; font-weight: 300; }
.detail { position: absolute; border: 6px solid #f88a3a; background: #fff; box-shadow: 4px 4px 4px rgba(70, 80, 90, .55); }
.detail svg { overflow: hidden; }
.one { left: 157px; top: 257px; }
.two { left: 755px; top: 381px; }
.blue { stroke: #15486b; }
.dark { stroke: #333; }
.gray { stroke: #777; }
.red { stroke: #7c1010; }
.bold { stroke-width: 2; }
.concrete { fill: #cdc13e; fill-opacity: .6; stroke: #8a8455; fill-rule: evenodd; }
.hoop { fill: none; stroke: #b3712b; stroke-width: 2; }
.hook { stroke: #85803a; }
.foot { stroke: #7f7a2c; stroke-width: 4; }
.caption { position: absolute; z-index: 3; height: 43px; padding: 0 48px 0 59px; background: rgba(123, 118, 116, .95); color: #fff; font-size: 24px; line-height: 42px; white-space: nowrap; }
.caption::before { content: ""; position: absolute; left: 16px; top: 14px; width: 15px; height: 15px; border-radius: 50%; background: #fff; }
.c1 { left: 268px; top: 653px; }
.c2 { left: 855px; top: 778px; padding-right: 40px; }

.viewbar { height: 26px; padding-left: 45px; background: #e5e5e5; border: solid #d4d4d4; border-width: 1px 0; }
.viewtools { display: flex; align-items: center; width: 824px; height: 24px; background: #fdfdfd; }
.viewtools svg, .status svg { width: 16px; height: 16px; }
.viewtools button { display: grid; place-items: center; width: 20px; height: 20px; margin-right: 8px; flex: none; }
.viewtools .near { margin-right: 3px; }
.viewtools .print { margin-right: 5px; }
.viewtools .fold-up { margin-right: 6px; }
.on { background: #c3dfd8; box-shadow: inset 0 0 0 1px #4fa08e; }
.grip { width: 1px; height: 18px; border-left: 2px dotted #aaa; margin-right: 4px; }
.grip.first { margin: 0 auto 0 3px; }
.bar { width: 1px; height: 14px; background: #d0d0d0; }
.viewtools .bar { margin: 0 2px 0 -3px; }

.status { display: grid; grid-template-columns: 1fr auto 1fr; align-items: center; height: 22px; background: #f0f0f0; }
.status .left, .status .right { display: flex; align-items: center; }
.status .left { padding-left: 4px; }
.status button { display: grid; place-items: center; width: 18px; height: 18px; margin-right: 4px; flex: none; }
.status .left .bar { margin: 0 3px 0 0; }
.status .right { justify-content: flex-end; padding-right: 2px; }
.status .caret { margin: 0 5px 0 -3px; border-width: 5px 4px 0; }
.status .caret + .on { margin-left: 0; }
.status output { font-family: Roboto, sans-serif; font-size: 11px; color: #444; padding-left: 22px; }
.zoom { display: flex; align-items: center; gap: 6px; padding-left: 5px; color: #777; font-size: 14px; }
.zoom input { appearance: none; width: 51px; height: 13px; background: linear-gradient(#b0b0b0, #b0b0b0) 0 6px / 100% 1px no-repeat; }
.zoom input::-webkit-slider-thumb { appearance: none; width: 5px; height: 13px; border: 1px solid #999; background: #eee; }

.pointer { position: absolute; left: 165px; top: 100px; z-index: 4; fill: #f88a3a; pointer-events: none; }
.step { position: absolute; left: 79px; top: 578px; z-index: 5; display: flex; align-items: center; gap: 8px; }
.num { width: 16px; height: 16px; border-radius: 50%; background: #f0883a; color: #fff; text-align: center; line-height: 16px; font-family: Roboto, sans-serif; }
.tip { position: relative; width: 214px; height: 37px; padding: 0 4px; border-radius: 3px; background: rgba(40, 40, 40, .74); color: #fff; font-size: 20px; line-height: 36px; white-space: nowrap; }
.tip::before { content: ""; position: absolute; left: -4px; top: 14px; border: 4px solid transparent; border-right-color: #555; border-left: 0; }
```

FILE: script.js
```js
const NS = "http://www.w3.org/2000/svg";
const TONES = ["blue", "blue", "dark", "gray", "blue", "blue", "dark"];

function path(svg, cls, d) {
  const p = document.createElementNS(NS, "path");
  p.setAttribute("class", cls);
  p.setAttribute("d", d);
  svg.appendChild(p);
}

const hline = (x1, x2, y) => `M${x1} ${y}H${x2}`;
const vline = (x, y1, y2) => `M${x} ${y1}V${y2}`;
const rect = ([x1, y1, x2, y2]) => `M${x1} ${y1}H${x2}V${y2}H${x1}Z`;
const slash = (x, y) => `M${x - 5} ${y + 6}L${x} ${y + 1}`;
const backslash = (x, y) => `M${x} ${y}L${x + 4} ${y + 4}`;

function cup(x1, x2, open, base) {
  const s = Math.sign(base - open) * 4;
  return `M${x1} ${open}V${base - s}Q${x1} ${base} ${x1 + 4} ${base}H${x2 - 4}Q${x2} ${base} ${x2} ${base - s}V${open}`;
}

function drawDetail(id, o) {
  const svg = document.getElementById(id);
  const [ox1, oy1, ox2, oy2] = o.outer;
  o.stirrups.forEach((x, i) => o.stirrupSpans.forEach(([a, b]) => path(svg, TONES[i % 7], vline(x, a, b))));
  o.rows.forEach((y, i) => {
    path(svg, TONES[(i + 1) % 7], hline(o.left[0], o.left[1], y) + hline(o.right[0], o.right[1], y));
  });
  o.shortRows.forEach(y => path(svg, "blue", hline(ox1 + 4, o.left[1], y) + hline(o.right[0], ox2 - 4, y)));
  o.bars.forEach(([cls, x1, x2, y]) => path(svg, cls, hline(x1, x2, y)));
  (o.mesh || []).forEach((x, i) => path(svg, i % 3 ? "blue" : "dark", vline(x, o.meshSpan[0], o.meshSpan[1])));
  o.mains.forEach(x => path(svg, "red bold", vline(x, o.top, oy2)));
  path(svg, "concrete", rect(o.outer) + rect(o.hole));
  path(svg, "hoop", o.mains.map(x => vline(x, oy1 + 1, oy2)).join(""));
  o.cups.forEach(c => path(svg, "hoop", cup(...c)));
  let hooks = "";
  o.hookRows.forEach(([y, step, first]) => o.stirrups.forEach((x, i) => {
    if (i % step === first) hooks += slash(x, y);
  }));
  o.rows.forEach(y => {
    hooks += backslash(o.mains[0], y);
    o.hookMains.forEach(x => { hooks += slash(x, y - 1); });
  });
  (o.meshHooks || []).forEach((y, r) => o.mesh.forEach((x, i) => {
    if (i % 2 !== r % 2) hooks += backslash(x - 1, y);
  }));
  path(svg, "hook", hooks);
  path(svg, "foot", o.mains.map(x => vline(x, oy2 - 17, oy2)).join(""));
}

const series = (start, step, n) => Array.from({ length: n }, (_, i) => Math.round(start + i * step) + 0.5);

drawDetail("detail-one", {
  outer: [523.5, 406.5, 804.5, 735.5], hole: [565.5, 445.5, 752.5, 643.5], top: 380,
  mains: [528, 560, 758, 779, 800], hookMains: [779, 800],
  stirrups: series(569.5, 10.44, 18), stirrupSpans: [[395, 443], [646, 733]],
  rows: [...series(445, 20.9, 12), 695.5, 717.5, 727.5], shortRows: [424.5, 685.5, 706.5],
  left: [502, 562], right: [756, 827],
  bars: [["gray", 491, 816, 410.5], ["dark", 491, 816, 425.5], ["red", 502, 816, 664.5], ["red", 502, 816, 681.5], ["red", 502, 816, 698.5], ["red", 502, 816, 715.5]],
  cups: [[538, 780, 414, 441], [538, 780, 674, 648], [538, 780, 705, 732]],
  hookRows: [[410, 1, 0], [425, 2, 0], [664, 1, 0], [681, 2, 0], [698, 2, 1], [715, 2, 0]]
});
const one = document.getElementById("detail-one");
path(one, "axis-z", "M481.500 710V738");
path(one, "axis-x", "M482 738.500H508");
path(one, "letter", "M479 700H484L479 706H484M513 735L519 741M519 735L513 741M479 735L482 738L485 735M482 738V742");
one.querySelector(".axis-z").setAttribute("stroke", "#3f86f5");
one.querySelector(".axis-x").setAttribute("stroke", "#f26b6b");

drawDetail("detail-two", {
  outer: [1112.5, 536.5, 1442.5, 860.5], hole: [1153.5, 574.5, 1401.5, 770.5], top: 510,
  mains: [1117, 1148, 1406, 1437], hookMains: [1437],
  stirrups: series(1158.5, 10.31, 24), stirrupSpans: [[525, 573]],
  rows: [...series(574, 20.55, 14), 851.5], shortRows: [554.5, 811.5, 831.5],
  left: [1091, 1150], right: [1404, 1463],
  bars: [["red", 1091, 1463, 540.5], ["gray", 1091, 1463, 555.5], ["dark", 1138, 1417, 773.5], ["red", 1138, 1417, 794.5], ["red", 1138, 1417, 814.5], ["red", 1138, 1417, 835.5], ["dark", 1138, 1417, 855.5]],
  mesh: [1158.5, 1174.5, 1195.5, 1215.5, 1236.5, 1257.5, 1277.5, 1298.5, 1318.5, 1339.5, 1360.5, 1380.5, 1396.5],
  meshSpan: [771, 858], meshHooks: [773, 794, 814, 835, 855],
  cups: [[1127, 1428, 543, 571]],
  hookRows: [[540, 1, 0], [555, 2, 0]]
});
```
